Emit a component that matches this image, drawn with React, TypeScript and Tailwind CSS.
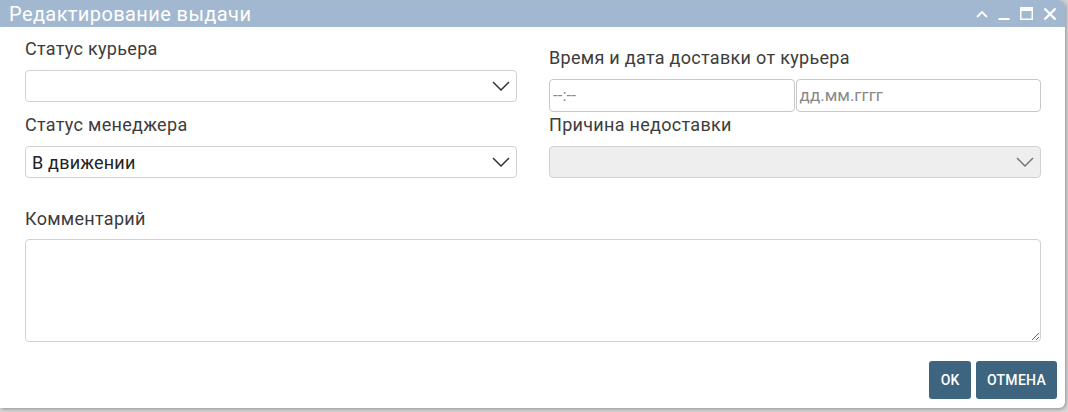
function Chevron({ muted }: { muted?: boolean }) {
  return (
    <svg
      viewBox="0 0 18 10"
      className={`pointer-events-none absolute right-[7px] top-1/2 -translate-y-1/2 w-[18px] h-[10px] ${muted ? 'text-[#777]' : 'text-[#333]'}`}
      fill="none"
      stroke="currentColor"
      strokeWidth="1.5"
    >
      <path d="M1 1 L9 9 L17 1" />
    </svg>
  );
}

function Select({ value, disabled }: { value?: string; disabled?: boolean }) {
  return (
    <div className="relative">
      <div
        className={`h-[32px] w-full rounded-[4px] border border-[#d2d2d2] px-[6px] flex items-center text-[18px] tracking-[0.2px] text-[#222] ${disabled ? 'bg-[#eeeeee]' : 'bg-white'}`}
      >
        {value}
      </div>
      <Chevron muted={disabled} />
    </div>
  );
}

export default function App() {
  return (
    <div
      className="relative w-[1068px] h-[412px] bg-[#d9d9d9] overflow-hidden"
      style={{ fontFamily: 'Roboto, "Liberation Sans", sans-serif' }}
    >
      {/* Dialog */}
      <div className="w-[1065px] h-[408px] bg-white rounded-tr-[6px] rounded-br-[6px] shadow-[1px_1px_4px_rgba(0,0,0,0.35)] flex flex-col">
        {/* Title bar */}
        <div className="h-[27px] bg-[#a2b8d0] rounded-tr-[6px] flex items-center pl-[9px] pr-[8px] text-white">
          <span className="text-[20px] leading-none tracking-[0.4px]">Редактирование выдачи</span>
          <div className="ml-auto flex items-center gap-[10px]">
            <svg viewBox="0 0 12 8" className="w-[12px] h-[8px]" fill="none" stroke="white" strokeWidth="1.8">
              <path d="M1 7 L6 2 L11 7" />
            </svg>
            <svg viewBox="0 0 12 12" className="w-[12px] h-[12px]" fill="none" stroke="white" strokeWidth="2">
              <path d="M0.5 11 H11.5" />
            </svg>
            <svg viewBox="0 0 13 13" className="w-[13px] h-[13px]" fill="none" stroke="white">
              <rect x="0.75" y="0.75" width="11.5" height="11.5" strokeWidth="1.5" />
              <path d="M0.75 2.5 H12.25" strokeWidth="3" />
            </svg>
            <svg viewBox="0 0 14 14" className="w-[14px] h-[14px]" fill="none" stroke="white" strokeWidth="2.4">
              <path d="M1.5 1.5 L12.5 12.5 M12.5 1.5 L1.5 12.5" />
            </svg>
          </div>
        </div>

        {/* Body */}
        <div className="flex-1 flex flex-col pl-[25px] pr-[24px] text-[#3c3c3c]">
          <div className="grid grid-cols-2 gap-x-[32px]">
            {/* Left column */}
            <div className="flex flex-col">
              <div className="mt-[10px] h-[24px] leading-[24px] text-[18px] tracking-[0.3px]">Статус курьера</div>
              <div className="mt-[9px]">
                <Select />
              </div>
              <div className="mt-[11px] h-[24px] leading-[24px] text-[18px] tracking-[0.3px]">Статус менеджера</div>
              <div className="mt-[9px]">
                <Select value="В движении" />
              </div>
            </div>

            {/* Right column */}
            <div className="flex flex-col">
              <div className="mt-[19px] h-[24px] leading-[24px] text-[18px] tracking-[0.3px]">Время и дата доставки от курьера</div>
              <div className="mt-[9px] flex gap-[1px]">
                <div className="flex-1 h-[33px] rounded-[4px] border border-[#c8c8c8] px-[3px] flex items-center text-[17px] text-[#8a8a8a]">
                  --:--
                </div>
                <div className="flex-1 h-[33px] rounded-[4px] border border-[#c8c8c8] px-[3px] flex items-center text-[17px] text-[#8a8a8a]">
                  дд.мм.гггг
                </div>
              </div>
              <div className="mt-[1px] h-[24px] leading-[24px] text-[18px] tracking-[0.3px]">Причина недоставки</div>
              <div className="mt-[9px]">
                <Select disabled />
              </div>
            </div>
          </div>

          <div className="mt-[29px] h-[24px] leading-[24px] text-[18px] tracking-[0.3px]">Комментарий</div>
          <textarea className="mt-[8px] h-[103px] w-full rounded-[4px] border border-[#d2d2d2] outline-none px-2 py-1" />

          <div className="mt-[19px] flex justify-end gap-[5px] -mr-[16px]">
            <button className="h-[38px] w-[42px] rounded-[3px] bg-[#3d6580] text-white text-[14px] font-medium">
              OK
            </button>
            <button className="h-[38px] w-[81px] rounded-[3px] bg-[#3d6580] text-white text-[14px] font-medium tracking-[0.3px]">
              ОТМЕНА
            </button>
          </div>
        </div>
      </div>
    </div>
  );
}
